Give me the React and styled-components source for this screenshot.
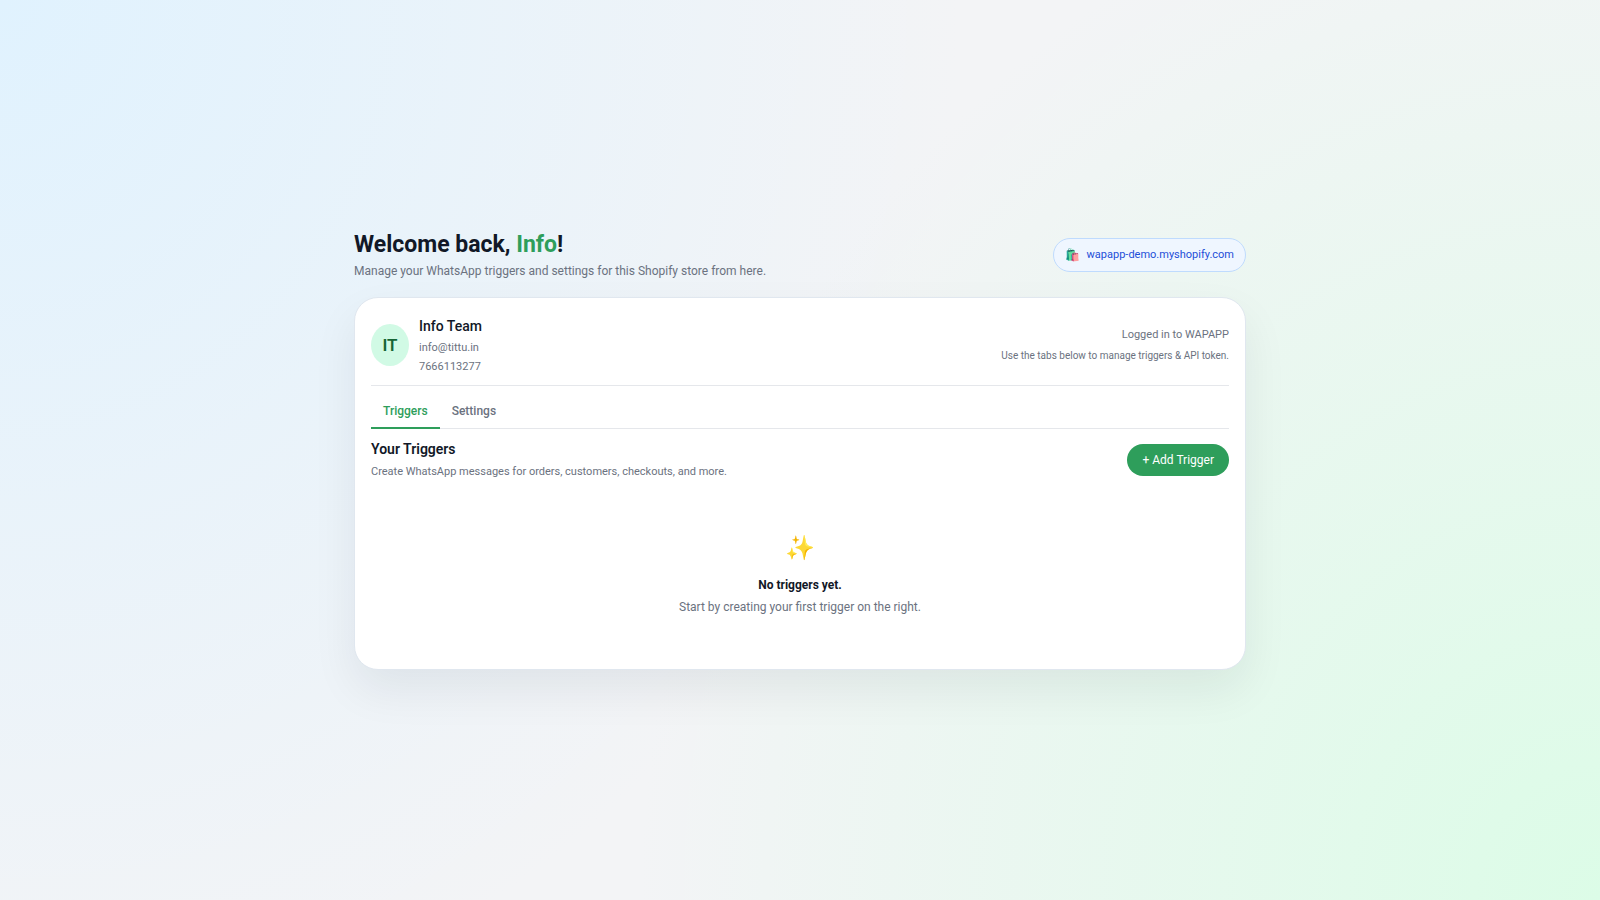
import React from "react";
import styled, { createGlobalStyle } from "styled-components";

function App() {
  const [tab, setTab] = React.useState("triggers");

  return (
    <Page>
      <GlobalStyle />
      <Wrapper>
        <Header>
          <div>
            <Title>
              Welcome back, <Accent>Info</Accent>!
            </Title>
            <Subtitle>
              Manage your WhatsApp triggers and settings for this Shopify store
              from here.
            </Subtitle>
          </div>
          <StoreBadge href="#store">
            <BadgeIcon>🛍️</BadgeIcon>
            wapapp-demo.myshopify.com
          </StoreBadge>
        </Header>
        <Card>
          <Profile>
            <User>
              <Avatar>IT</Avatar>
              <div>
                <UserName>Info Team</UserName>
                <UserMeta>info@tittu.in</UserMeta>
                <UserMeta>7666113277</UserMeta>
              </div>
            </User>
            <LoginInfo>
              <LoginStatus>Logged in to WAPAPP</LoginStatus>
              <LoginHint>
                Use the tabs below to manage triggers &amp; API token.
              </LoginHint>
            </LoginInfo>
          </Profile>
          <Tabs role="tablist">
            <Tab
              role="tab"
              aria-selected={tab === "triggers"}
              $active={tab === "triggers"}
              onClick={() => setTab("triggers")}
            >
              Triggers
            </Tab>
            <Tab
              role="tab"
              aria-selected={tab === "settings"}
              $active={tab === "settings"}
              onClick={() => setTab("settings")}
            >
              Settings
            </Tab>
          </Tabs>
          <SectionHeader>
            <div>
              <SectionTitle>Your Triggers</SectionTitle>
              <SectionText>
                Create WhatsApp messages for orders, customers, checkouts, and
                more.
              </SectionText>
            </div>
            <AddButton>+ Add Trigger</AddButton>
          </SectionHeader>
          <Empty>
            <EmptyIcon>✨</EmptyIcon>
            <EmptyTitle>No triggers yet.</EmptyTitle>
            <EmptyText>
              Start by creating your first trigger on the right.
            </EmptyText>
          </Empty>
        </Card>
      </Wrapper>
    </Page>
  );
}

export default App;

const GlobalStyle = createGlobalStyle`
  * {
    box-sizing: border-box;
  }
  body {
    margin: 0;
    font-family: Roboto, Inter, sans-serif;
    color: #111827;
  }
  h1, h2, p {
    margin: 0;
  }
  button {
    font-family: inherit;
    cursor: pointer;
  }
`;
const Page = styled.main`
  min-height: 100vh;
  display: flex;
  align-items: center;
  justify-content: center;
  padding: 24px 24px 26px;
  background: radial-gradient(
      60% 117% at top left,
      #e0f2fe 0,
      transparent 100%
    ),
    radial-gradient(60% 117% at bottom right, #dcfce7 0, transparent 100%),
    #f3f4f6;
`;
const Wrapper = styled.div`
  width: 100%;
  max-width: 892px;
`;
const Header = styled.header`
  display: flex;
  justify-content: space-between;
  align-items: center;
  margin-bottom: 16px;
`;
const Title = styled.h1`
  font-size: 23px;
  line-height: 32px;
  font-weight: 700;
`;
const Accent = styled.span`
  color: #2e9e5b;
`;
const Subtitle = styled.p`
  font-size: 12px;
  line-height: 20px;
  color: #6b7280;
`;
const StoreBadge = styled.a`
  display: flex;
  align-items: center;
  gap: 7px;
  padding: 7px 11px;
  border: 1px solid #bfdbfe;
  border-radius: 999px;
  background: #eff6ff;
  color: #1d4ed8;
  font-size: 11px;
  line-height: 18px;
  text-decoration: none;
`;
const BadgeIcon = styled.span`
  font-size: 12px;
`;
const Card = styled.section`
  padding: 16px;
  border: 1px solid #e0e7ef;
  border-radius: 24px;
  background: white;
  box-shadow: 0 20px 45px rgba(15, 23, 42, 0.07);
`;
const Profile = styled.div`
  display: flex;
  justify-content: space-between;
  align-items: center;
  padding-bottom: 9px;
  border-bottom: 1px solid #e5e7eb;
`;
const User = styled.div`
  display: flex;
  align-items: center;
  gap: 10px;
`;
const Avatar = styled.div`
  width: 38px;
  height: 42px;
  display: flex;
  align-items: center;
  justify-content: center;
  border-radius: 50%;
  background: #d1fae5;
  color: #166534;
  font-size: 17px;
  font-weight: 600;
`;
const UserName = styled.h2`
  font-size: 14px;
  line-height: 24px;
  font-weight: 500;
`;
const UserMeta = styled.p`
  font-size: 11px;
  line-height: 19px;
  color: #6b7280;
`;
const LoginInfo = styled.div`
  text-align: right;
  color: #6b7280;
`;
const LoginStatus = styled.p`
  font-size: 11px;
  line-height: 22px;
`;
const LoginHint = styled.p`
  font-size: 10px;
  line-height: 20px;
`;
const Tabs = styled.div`
  display: flex;
  margin-top: 8px;
  border-bottom: 1px solid #e5e7eb;
`;
const Tab = styled.button`
  padding: 8px 12px 7px;
  margin-bottom: -1px;
  border: none;
  border-bottom: 2px solid ${(p) => (p.$active ? "#2e9e5b" : "transparent")};
  background: none;
  color: ${(p) => (p.$active ? "#2e9e5b" : "#6b7280")};
  font-size: 12px;
  line-height: 18px;
  font-weight: 500;
`;
const SectionHeader = styled.div`
  display: flex;
  justify-content: space-between;
  align-items: center;
  padding-top: 9px;
`;
const SectionTitle = styled.h2`
  font-size: 14px;
  line-height: 22px;
  font-weight: 600;
`;
const SectionText = styled.p`
  font-size: 11px;
  line-height: 23px;
  color: #6b7280;
`;
const AddButton = styled.button`
  padding: 7px 15px;
  border: none;
  border-radius: 999px;
  background: #2e9e5b;
  color: white;
  font-size: 12px;
  line-height: 18px;
`;
const Empty = styled.div`
  padding: 40px 16px 35px;
  text-align: center;
`;
const EmptyIcon = styled.div`
  font-size: 24px;
  line-height: 51px;
`;
const EmptyTitle = styled.p`
  font-size: 12px;
  line-height: 22px;
  font-weight: 700;
`;
const EmptyText = styled.p`
  font-size: 12px;
  line-height: 22px;
  color: #6b7280;
`;
